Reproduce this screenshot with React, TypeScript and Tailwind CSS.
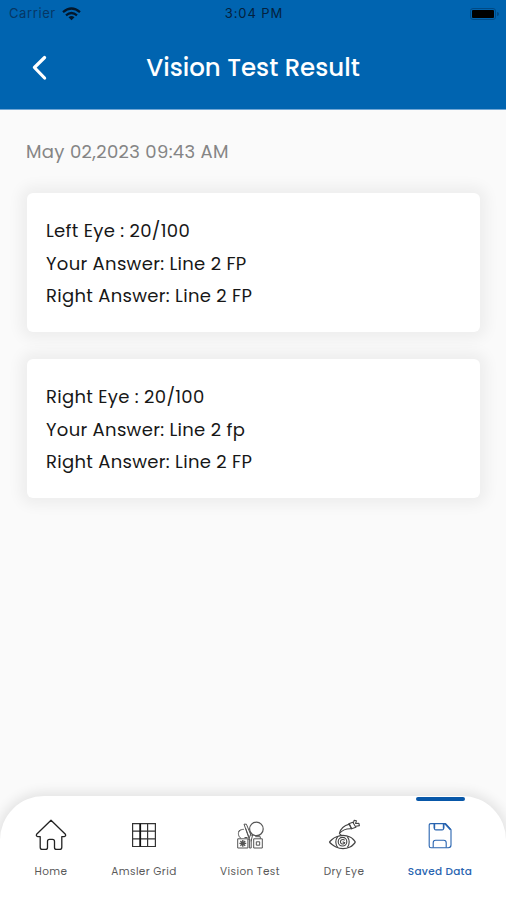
import React from "react";

interface EyeResult {
  lines: string[];
}

const results: EyeResult[] = [
  { lines: ["Left Eye : 20/100", "Your Answer: Line 2 FP", "Right Answer: Line 2 FP"] },
  { lines: ["Right Eye : 20/100", "Your Answer: Line 2 fp", "Right Answer: Line 2 FP"] },
];

const HomeIcon = () => (
  <svg width="34" height="34" viewBox="0 0 34 34" fill="none" stroke="#222" strokeWidth="1.3" strokeLinejoin="round">
    <path d="M17 2.2 2.6 16.2q-.9 2 1.2 2.4H6.2v10.6q0 2.2 2.3 2.2h3q2 0 2-2v-6q0-2 2-2h3q2 0 2 2v6q0 2 2 2h3q2.3 0 2.3-2.2V18.6h2.4q2.1-.4 1.2-2.4Z" />
  </svg>
);

const GridIcon = () => (
  <svg width="34" height="34" viewBox="0 0 34 34" fill="none" stroke="#333" strokeWidth="1.2">
    <path d="M5.6 5.7h22.8v22.8H5.6ZM20.6 5.7v22.8M5.6 13.2h22.8M5.6 20.8h22.8" />
    <path d="M13.2 5.7v22.8" stroke="#111" strokeWidth="1.8" />
  </svg>
);

const VisionIcon = () => (
  <svg width="34" height="34" viewBox="0 0 34 34" fill="none" stroke="#555" strokeWidth="1">
    <circle cx="23.4" cy="10.9" r="6.8" strokeWidth="1.2" />
    <path d="m18.2 14.8-2.6 7M19.8 16.3l-1.8 7M11 6.2l5.4 15.3M13.4 6.2 18.3 18M11 6.2h2.4M12.5 10l3.4 9" />
    <path d="M10.8 11.3c-4 .2-5.8 2.4-5.3 5.3.3 1.7 1.2 3.1 2.7 3.9M5.3 13.5l2-1.5M11.5 19.5h3" />
    <path d="M4.7 20.8h10.2V30H4.7ZM20.7 20.8h8.6V30h-8.6Z" />
    <path d="M16.4 21v9h1.8v-9M22.3 18.7h5v2" />
    <path d="M9.8 22v6.8M6.4 25.4h6.8M7.4 23.1l4.8 4.6M12.2 23.1l-4.800 4.6" strokeWidth="1.4" />
    <path d="M23.3 23.8h3.4v3.4h-3.4Z" />
  </svg>
);

const DryEyeIcon = () => (
  <svg width="34" height="34" viewBox="0 0 34 34" fill="none" stroke="#444" strokeWidth="1.1" strokeLinejoin="round">
    <path d="M2.6 24c.2-1 4.2-4.2 6.4-5 4.6-2.1 9.4-2.1 14 0 2.2.8 5 4 5.2 5-.2 1-3 4.2-5.2 5-4.6 2.1-9.4 2.1-14 0-2.2-.8-6.2-4-6.400-5Z" strokeWidth="1.3" />
    <path d="M10.6 18.6q-3.6 5.4 0 10.8M20.4 18.6q3.6 5.4 0 10.8" />
    <circle cx="15.5" cy="23.7" r="4.3" />
    <path d="M17.6 22.4a2.3 2.3 0 1 0 .2 2.4l-2.2-1.1" />
    <path d="M12.4 15.4c1-4.3 4.700-7.900 10-9.300l2.200 4.700c-4.500-.4-8.700.8-12.200 4.600Z" />
    <path d="M12.4 15.400q.4 1.300 2 1.400" />
    <path d="m21.8 5.7 4-1.5 3.1 5.1-4.3 1.5ZM26.4 4.800l.8-2.600 2.200.6-.8 2.700 3.300-.1.500 2.200-3.300.7" />
  </svg>
);

const SaveIcon = () => (
  <svg width="34" height="34" viewBox="0 0 34 34" fill="none" stroke="#2864b0" strokeWidth="1.1" strokeLinejoin="round">
    <path d="M7.8 5.6h14.8l5.4 6V27q0 2.7-2.7 2.7H8q-1.8 0-1.8-1.8V7.2q0-1.6 1.6-1.6Z" />
    <path d="M11.400 5.6v4.900q0 1.400 1.400 1.400h6.400q1.400 0 1.400-1.400V5.6M10.2 29.500v-4.800q0-2.400 2.400-2.400h8.200q2.400 0 2.400 2.400v4.800" />
    <path d="m22 5.8 5.5 6M11.4 6v4.5M20.6 6v4.5" strokeWidth="1.6" />
  </svg>
);

const tabs = [
  { label: "Home", icon: <HomeIcon />, width: "w-[102px]" },
  { label: "Amsler Grid", icon: <GridIcon />, width: "w-[84px]" },
  { label: "Vision Test", icon: <VisionIcon />, width: "w-[128px]" },
  { label: "Dry Eye", icon: <DryEyeIcon />, width: "w-[60px]" },
  { label: "Saved Data", icon: <SaveIcon />, width: "w-[132px]", active: true },
];

const StatusBar = () => (
  <div className="grid h-[27px] grid-cols-3 items-center pr-[7px] pl-[9px] font-['Inter',sans-serif] text-[13px] text-[#04213d]">
    <div className="flex items-center gap-[6px]">
      <span className="tracking-[0.6px] text-[#063765]">Carrier</span>
      <svg width="19" height="14" viewBox="0 0 19 14" fill="none" stroke="#03172b" strokeWidth="2.3">
        <path d="M1 5.1q8.5-7.2 17 0M4 8.3q5.5-4.6 11 0" />
        <path d="m9.5 13.2-3-3q3-2.4 6 0Z" fill="#03172b" stroke="none" />
      </svg>
    </div>
    <span className="text-center tracking-[0.9px]">3:04 PM</span>
    <div className="flex items-center justify-end gap-px">
      <div className="h-3 w-[26px] rounded-[3px] border border-[#004a85] p-px">
        <div className="h-full rounded-[1px] bg-black" />
      </div>
      <div className="h-1 w-[2px] rounded-r bg-[#004a85]" />
    </div>
  </div>
);

const Header = () => (
  <header className="h-[110px] border-b border-[#71a7d5] bg-[#0064b0]">
    <StatusBar />
    <div className="grid h-[81px] grid-cols-[79px_1fr_79px] items-center">
      <button className="flex justify-center" aria-label="Back">
        <svg width="18" height="26" viewBox="0 0 18 26" fill="none" stroke="white" strokeWidth="3.2" strokeLinecap="round" strokeLinejoin="round">
          <path d="M13.6 2.500 3.4 12.500 13.6 23" />
        </svg>
      </button>
      <h1 className="pt-[2px] text-center text-[24.5px] font-medium whitespace-nowrap text-white">
        Vision Test Result
      </h1>
    </div>
  </header>
);

const ResultCard = ({ result }: { result: EyeResult }) => (
  <div className="h-[139px] rounded-[6px] bg-white pt-[21px] pl-[19px] shadow-[0_0_14px_7px_rgba(0,0,0,0.05)]">
    {result.lines.map((line) => (
      <p key={line} className="h-[32.5px] text-[18px] leading-[33px] tracking-[0.31px] whitespace-nowrap text-[#171717]">
        {line}
      </p>
    ))}
  </div>
);

const TabBar = () => (
  <nav className="flex h-[104px] rounded-t-[44px] bg-white shadow-[0_0_12px_4px_rgba(0,0,0,0.09)]">
    {tabs.map((tab) => (
      <div key={tab.label} className={`flex flex-col items-center ${tab.width}`}>
        <div className={`mt-px h-1 w-[49px] rounded-full ${tab.active ? "bg-[#0857a8]" : ""}`} />
        <div className="mt-[17px]">{tab.icon}</div>
        <span
          className={`mt-3 text-[10.5px] leading-4 whitespace-nowrap ${
            tab.active ? "font-medium tracking-[0.3px] text-[#2864b0]" : "tracking-[0.4px] text-[#5a5a5a]"
          }`}
        >
          {tab.label}
        </span>
      </div>
    ))}
  </nav>
);

export default function App() {
  return (
    <div className="flex h-[900px] w-[506px] flex-col overflow-hidden bg-[#fafafa] font-['Poppins','Inter',sans-serif]">
      <Header />
      <main className="flex-1 pt-[28px] pr-[26px] pl-[27px]">
        <p className="-ml-px h-[55px] text-[18px] leading-[28px] tracking-[0.34px] whitespace-nowrap text-[#858585]">
          May 02,2023 09:43 AM
        </p>
        <div className="flex flex-col gap-[27px]">
          {results.map((result, idx) => (
            <ResultCard key={idx} result={result} />
          ))}
        </div>
      </main>
      <TabBar />
    </div>
  );
}
